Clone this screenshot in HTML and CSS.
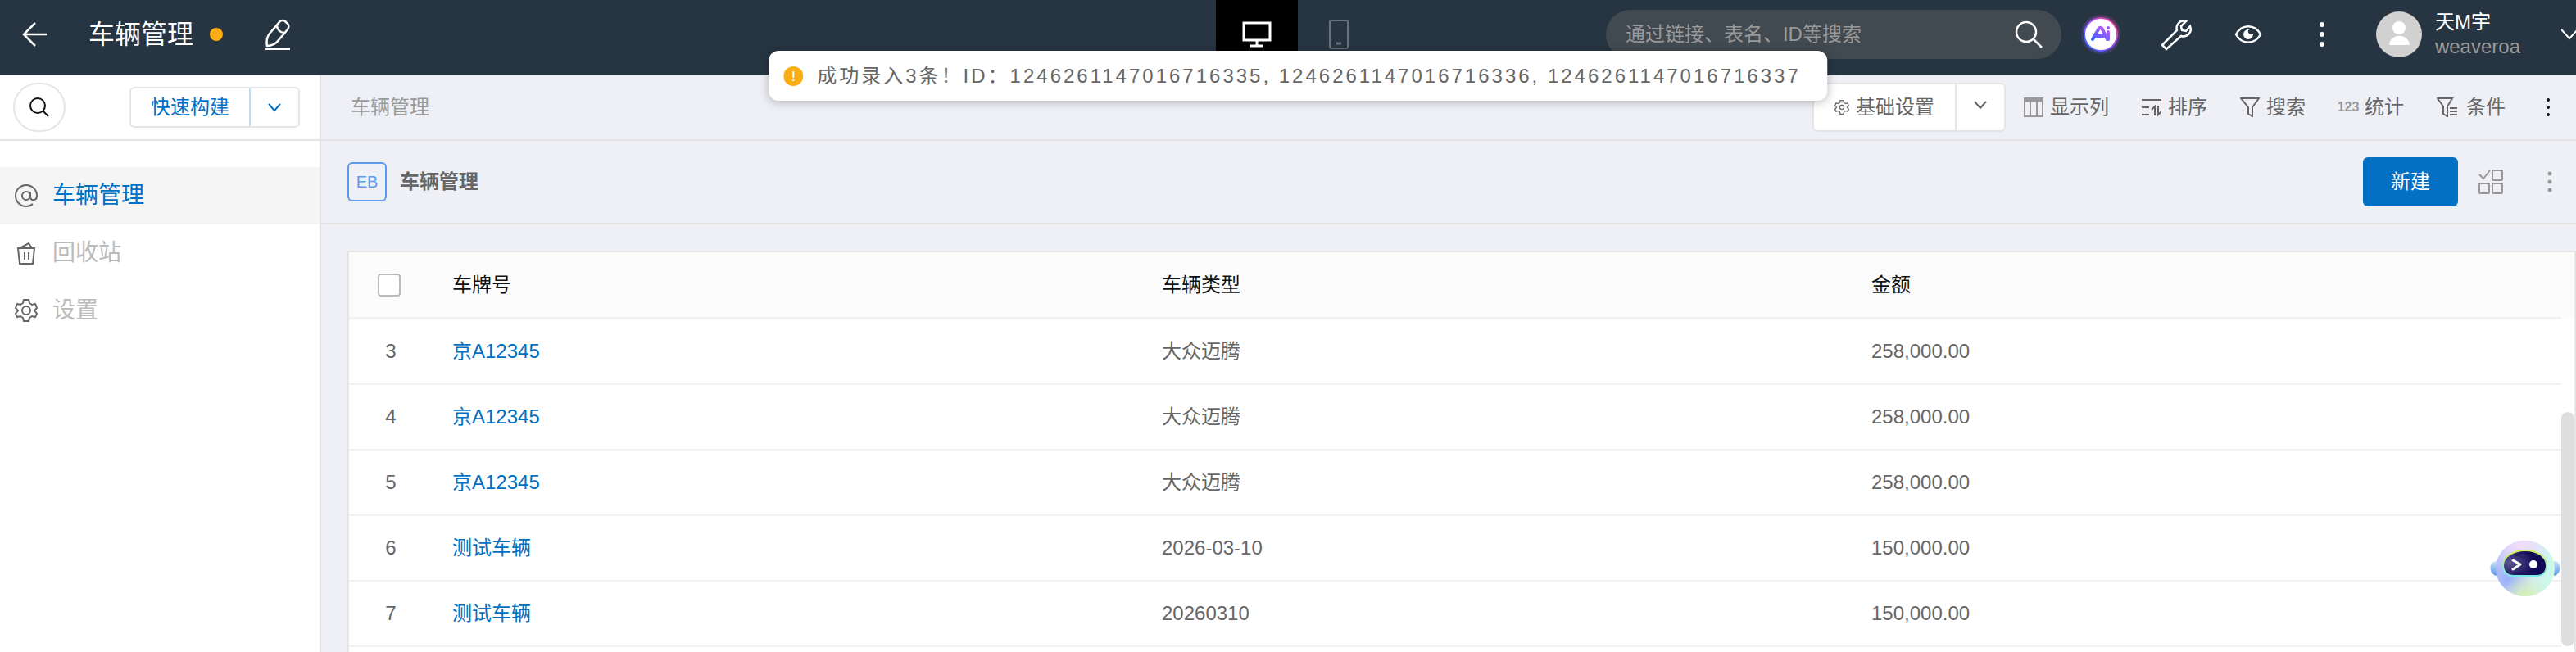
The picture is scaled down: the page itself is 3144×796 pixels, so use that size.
FILE: index.html
```html
<!DOCTYPE html>
<html lang="zh-CN">
  <head>
    <meta charset="UTF-8" />
    <meta name="viewport" content="width=device-width, initial-scale=1.0" />
    <title>车辆管理</title>
    <link rel="stylesheet" href="styles.css">
  </head>
  <body>
    <header class="topbar">
      <div class="topbar-left">
        <button class="icon-btn back" aria-label="返回">
          <svg width="32" height="32" viewBox="0 0 32 32"><path d="M17 2 3 16l14 14M3 16h28" /></svg>
        </button>
        <h1 class="app-name">车辆管理</h1>
        <span class="status-dot"></span>
        <button class="icon-btn" aria-label="编辑">
          <svg width="34" height="38" viewBox="0 0 34 38"><path d="M4 33c-1-5 0-11 3-15L18 5c2-3 5-4 8-2l2 2c3 2 3 5 1 8L18 26c-3 4-8 7-14 7zM16 8c0 5 4 9 9 9M2 37h30" /></svg>
        </button>
      </div>

      <div class="device-tabs">
        <button class="device-tab active" aria-label="电脑端">
          <svg width="36" height="32" viewBox="0 0 36 32"><path d="M2 2h32v21H2zM18 23v7M10 30h16" stroke-width="3" /></svg>
        </button>
        <button class="device-tab" aria-label="移动端">
          <svg width="26" height="38" viewBox="0 0 26 38"><rect x="2" y="2" width="22" height="34" rx="2" /><path d="M10 30h6" stroke-width="3" /></svg>
        </button>
      </div>

      <div class="topbar-right">
        <div class="global-search">
          <input type="text" aria-label="全局搜索" placeholder="通过链接、表名、ID等搜索" />
          <button class="icon-btn" aria-label="搜索">
            <svg width="36" height="36" viewBox="0 0 36 36"><circle cx="15" cy="15" r="12" /><path d="m24 24 10 10" /></svg>
          </button>
        </div>
        <div class="tools">
          <button class="icon-btn" aria-label="AI">
            <svg width="48" height="48" viewBox="0 0 48 48">
              <defs>
                <linearGradient id="ring" x1="0" y1="1" x2="1" y2="0">
                  <stop offset="0" stop-color="#2f6bff" />
                  <stop offset="0.5" stop-color="#9a55ff" />
                  <stop offset="1" stop-color="#ff3f7f" />
                </linearGradient>
                <linearGradient id="ai" gradientUnits="userSpaceOnUse" x1="14" y1="32" x2="24" y2="12">
                  <stop offset="0" stop-color="#2f62ff" />
                  <stop offset="1" stop-color="#c85cf5" />
                </linearGradient>
              </defs>
              <circle cx="24" cy="24" r="24" fill="url(#ring)" stroke="none" opacity="0.25" />
              <circle cx="24" cy="24" r="20" fill="#fff" stroke="url(#ring)" stroke-width="2" />
              <path d="m14 30 7-12c1-3 4-3 5 0l6 12M19 26h8M33 21v9" stroke="url(#ai)" stroke-width="4" stroke-linecap="round" />
              <circle cx="33" cy="16" r="2" fill="#a355e8" stroke="none" />
            </svg>
          </button>
          <button class="icon-btn" aria-label="工具">
            <svg width="48" height="40" viewBox="0 0 48 40"><path d="M9 33 27 15c-2-6 3-13 11-11l-6 6 1 5 5 1 5-6c3 8-4 14-11 12L14 38z" /></svg>
          </button>
          <button class="icon-btn" aria-label="预览">
            <svg width="48" height="32" viewBox="0 0 48 32"><path d="M9 16c7-13 23-13 30 0-7 13-23 13-30 0z" /><path d="M25 10a6 6 0 1 0 5 5 3 3 0 0 1-5-5z" fill="#fff" stroke="none" /></svg>
          </button>
          <button class="icon-btn dots" aria-label="更多">
            <svg width="48" height="32" viewBox="0 0 48 32"><circle cx="24" cy="4" r="3" /><circle cx="24" cy="16" r="3" /><circle cx="24" cy="28" r="3" /></svg>
          </button>
          <div class="user">
            <svg class="avatar" width="56" height="56" viewBox="0 0 56 56"><circle cx="28" cy="28" r="28" fill="#d1d1d1" /><circle cx="28" cy="20" r="8" fill="#fff" /><path d="M16 41c1-15 24-15 25 0z" fill="#fff" /></svg>
            <div class="user-text">
              <span class="user-name">天M宇</span>
              <span class="user-team">weaveroa</span>
            </div>
            <button class="icon-btn" aria-label="展开">
              <svg width="18" height="14" viewBox="0 0 18 14"><path d="m0 1 10 11L20 1" stroke-width="2" /></svg>
            </button>
          </div>
        </div>
      </div>
    </header>

    <div class="toast" role="status">
      <svg width="24" height="24" viewBox="0 0 24 24"><circle cx="12" cy="12" r="12" fill="#faad14" /><path d="M12 6v8M12 16v2" stroke="#fff" stroke-width="2" /></svg>
      <span>成功录入3条！ID：1246261147016716335, 1246261147016716336, 1246261147016716337</span>
    </div>

    <div class="layout">
      <aside class="sidebar">
        <div class="sidebar-head">
          <button class="round-search" aria-label="搜索菜单">
            <svg width="24" height="24" viewBox="0 0 24 24"><circle cx="10" cy="10" r="9" /><path d="m16 16 7 7" /></svg>
          </button>
          <div class="split-btn build">
            <button class="split-main">快速构建</button>
            <button class="split-arrow" aria-label="更多构建">
              <svg width="16" height="12" viewBox="0 0 16 12"><path d="m1 2 7 8 7-8" /></svg>
            </button>
          </div>
        </div>
        <nav class="menu">
          <a class="menu-item active" href="#">
            <svg width="28" height="28" viewBox="0 0 28 28"><circle cx="14" cy="14" r="5" /><path d="M19 9v7c0 4 8 5 8-2A13 13 0 1 0 14 27c3 0 6-1 8-3" /></svg>
            车辆管理
          </a>
          <a class="menu-item" href="#">
            <svg width="28" height="28" viewBox="0 0 28 28"><path d="M4 8h20l-2 19H6zM6 8l11-6 4 6M12 13v9M17 13v9" /></svg>
            回收站
          </a>
          <a class="menu-item" href="#">
            <svg width="28" height="28" viewBox="0 0 28 28"><circle cx="14" cy="14" r="5" /><path d="M11 1h6l1 4 3 2 4-1 2 5-3 3 3 4-2 4-4-1-3 2-1 4h-6l-1-4-3-2-4 1-2-4 3-4-3-3 2-5 4 1 3-2z" /></svg>
            设置
          </a>
        </nav>
      </aside>

      <main class="main">
        <div class="toolbar">
          <span class="crumb">车辆管理</span>
          <div class="toolbar-actions">
            <div class="split-btn settings">
              <button class="split-main">
                <svg width="18" height="18" viewBox="0 0 28 28"><circle cx="14" cy="14" r="4" /><path d="M11 1h6l1 4 3 2 4-1 2 5-3 3 3 4-2 4-4-1-3 2-1 4h-6l-1-4-3-2-4 1-2-4 3-4-3-3 2-5 4 1 3-2z" /></svg>
                基础设置
              </button>
              <button class="split-arrow" aria-label="更多设置">
                <svg width="16" height="16" viewBox="0 0 16 16"><path d="m1 1 7 8 7-8" /></svg>
              </button>
            </div>
            <div class="actions">
              <button class="action">
                <svg width="24" height="24" viewBox="0 0 24 24" class="light"><path d="M1 3h22" stroke-width="5" /><path d="M1 1h22v22H1zM8 4v19M16 4v19" /></svg>
                显示列
              </button>
              <button class="action">
                <svg width="24" height="24" viewBox="0 0 24 24"><path d="M0 3h24M0 12h9M0 21h9M12 15l4-4v11M20 10v11l4-4" /></svg>
                排序
              </button>
              <button class="action">
                <svg width="24" height="24" viewBox="0 0 24 24"><path d="M1 1h22l-8 11v11l-5-3v-8z" /></svg>
                搜索
              </button>
              <button class="action"><span class="num-icon">123</span>统计</button>
              <button class="action">
                <svg width="28" height="24" viewBox="0 0 28 24"><path d="M1 1h18l-6 10v12l-5-3v-9zM16 13h9M16 17h9M16 21h9" /></svg>
                条件
              </button>
              <button class="icon-btn dots dark" aria-label="更多">
                <svg width="24" height="24" viewBox="0 0 24 24"><circle cx="12" cy="3" r="2" /><circle cx="12" cy="12" r="2" /><circle cx="12" cy="21" r="2" /></svg>
              </button>
            </div>
          </div>
        </div>

        <div class="titlebar">
          <span class="eb">EB</span>
          <h2 class="page-title">车辆管理</h2>
          <button class="primary">新建</button>
          <button class="icon-btn grid-btn" aria-label="批量操作">
            <svg width="32" height="32" viewBox="0 0 32 32"><path d="m2 7 5 5 8-10" /><rect x="18" y="2" width="12" height="12" rx="1" /><rect x="2" y="18" width="12" height="12" rx="1" /><rect x="18" y="18" width="12" height="12" rx="1" /></svg>
          </button>
          <button class="icon-btn dots grey" aria-label="更多">
            <svg width="24" height="28" viewBox="0 0 24 28"><circle cx="12" cy="4" r="2.5" /><circle cx="12" cy="14" r="2.5" /><circle cx="12" cy="24" r="2.5" /></svg>
          </button>
        </div>

        <div class="content">
          <div class="table-box">
            <table class="table">
              <thead>
                <tr>
                  <th class="col-num"><input type="checkbox" class="check" aria-label="全选" /></th>
                  <th>车牌号</th>
                  <th>车辆类型</th>
                  <th>金额</th>
                </tr>
              </thead>
              <tbody>
                <tr>
                  <td class="col-num">3</td>
                  <td><a href="#">京A12345</a></td>
                  <td>大众迈腾</td>
                  <td>258,000.00</td>
                </tr>
                <tr>
                  <td class="col-num">4</td>
                  <td><a href="#">京A12345</a></td>
                  <td>大众迈腾</td>
                  <td>258,000.00</td>
                </tr>
                <tr>
                  <td class="col-num">5</td>
                  <td><a href="#">京A12345</a></td>
                  <td>大众迈腾</td>
                  <td>258,000.00</td>
                </tr>
                <tr>
                  <td class="col-num">6</td>
                  <td><a href="#">测试车辆</a></td>
                  <td>2026-03-10</td>
                  <td>150,000.00</td>
                </tr>
                <tr>
                  <td class="col-num">7</td>
                  <td><a href="#">测试车辆</a></td>
                  <td>20260310</td>
                  <td>150,000.00</td>
                </tr>
              </tbody>
            </table>
            <div class="scroll">
              <div class="scroll-head"></div>
              <div class="scroll-thumb"></div>
            </div>
          </div>
        </div>
      </main>
    </div>

    <button class="robot" aria-label="智能助手">
      <svg width="86" height="70" viewBox="0 0 86 70">
        <defs>
          <linearGradient id="ball" x1="0" y1="0.4" x2="1" y2="0.6">
            <stop offset="0" stop-color="#b4c0fb" />
            <stop offset="0.5" stop-color="#d9e6f6" />
            <stop offset="1" stop-color="#c9fce8" />
          </linearGradient>
          <radialGradient id="ball-top" cx="0.4" cy="0.05" r="0.55">
            <stop offset="0" stop-color="#f3dcfb" />
            <stop offset="1" stop-color="#f3dcfb" stop-opacity="0" />
          </radialGradient>
          <radialGradient id="ball-left" cx="0.22" cy="0.7" r="0.4">
            <stop offset="0" stop-color="#98affa" />
            <stop offset="1" stop-color="#98affa" stop-opacity="0" />
          </radialGradient>
          <radialGradient id="ball-bottom" cx="0.5" cy="1" r="0.4">
            <stop offset="0" stop-color="#d6f0b4" />
            <stop offset="1" stop-color="#d6f0b4" stop-opacity="0" />
          </radialGradient>
          <linearGradient id="ear" x1="0" y1="0" x2="0" y2="1">
            <stop offset="0" stop-color="#c9e6fb" />
            <stop offset="1" stop-color="#5a92ea" />
          </linearGradient>
          <linearGradient id="rim" x1="0" y1="0" x2="0" y2="1">
            <stop offset="0" stop-color="#d8f25a" />
            <stop offset="1" stop-color="#73ecea" />
          </linearGradient>
          <radialGradient id="face" cx="0.15" cy="0.5" r="0.6">
            <stop offset="0" stop-color="#5b5590" />
            <stop offset="1" stop-color="#130a55" />
          </radialGradient>
        </defs>
        <path d="M8 25c-10 0-10 16 0 18zM78 25c10 0 10 16 0 18z" fill="url(#ear)" />
        <ellipse cx="43" cy="34" rx="36" ry="34" fill="url(#ball)" />
        <ellipse cx="43" cy="34" rx="36" ry="34" fill="url(#ball-top)" />
        <ellipse cx="43" cy="34" rx="36" ry="34" fill="url(#ball-left)" />
        <ellipse cx="43" cy="34" rx="36" ry="34" fill="url(#ball-bottom)" />
        <path d="M43 12c14 0 26 7 26 18 0 9-5 13-12 13H29c-8 0-13-5-13-13 0-11 13-18 27-18z" fill="url(#face)" stroke="url(#rim)" stroke-width="2" />
        <path d="m28 24 9 5-9 6" fill="none" stroke="#fff" stroke-width="3" stroke-linecap="round" stroke-linejoin="round" />
        <circle cx="53" cy="29" r="5" fill="#fff" />
      </svg>
    </button>
  </body>
</html>
```
FILE: styles.css
```css
* {
  box-sizing: border-box;
}
body {
  margin: 0;
  height: 100vh;
  overflow: hidden;
  display: flex;
  flex-direction: column;
  font-family: "Liberation Sans", "Noto Sans CJK SC", sans-serif;
  font-size: 24px;
  line-height: 32px;
  color: #666;
  background: #eff0f5;
}
button {
  font: inherit;
  color: inherit;
  background: none;
  border: 0;
  padding: 0;
  cursor: pointer;
}
a {
  color: #0070c4;
  text-decoration: none;
}
h1,
h2 {
  margin: 0;
}
svg {
  display: block;
  flex: none;
}
button svg,
.menu-item svg {
  fill: none;
  stroke: currentColor;
  stroke-width: 2;
}

/* top bar */
.topbar {
  display: grid;
  grid-template-columns: 1fr 200px 1fr;
  flex: none;
  height: 92px;
  padding-left: 24px;
  background: #273542;
  color: #fff;
}
.topbar-left,
.topbar-right,
.tools,
.user {
  display: flex;
  align-items: center;
}
.back {
  margin: 0 50px 0 2px;
}
.app-name {
  font-size: 32px;
  line-height: 40px;
  font-weight: normal;
}
.status-dot {
  width: 16px;
  height: 16px;
  margin: 0 50px 0 20px;
  border-radius: 50%;
  background: #faad14;
}
.topbar-left,
.topbar-right {
  padding-bottom: 8px;
}
.topbar-left .icon-btn svg,
.global-search svg,
.tools svg {
  stroke-width: 2.5;
}
.device-tabs {
  display: grid;
  grid-template-columns: 1fr 1fr;
}
.device-tab {
  display: flex;
  align-items: center;
  justify-content: center;
  padding-bottom: 8px;
  color: #68727b;
}
.device-tab.active {
  background: #000;
  color: #fff;
}
.topbar-right {
  justify-content: flex-end;
  gap: 24px;
}
.global-search {
  display: flex;
  align-items: center;
  width: 556px;
  height: 60px;
  padding: 0 22px 0 24px;
  border-radius: 30px;
  background: #414951;
}
.global-search input {
  flex: 1;
  min-width: 0;
  padding: 0;
  border: 0;
  outline: 0;
  background: none;
  color: #fff;
  font: inherit;
}
.global-search input::placeholder {
  color: #999;
  opacity: 1;
}
.tools {
  gap: 42px;
}
.dots svg {
  fill: currentColor;
  stroke: none;
}
.user-text {
  display: flex;
  flex-direction: column;
  margin: 0 50px 0 16px;
  line-height: 30px;
}
.user-team {
  color: #999;
}

/* message */
.toast {
  position: absolute;
  top: 62px;
  left: 50%;
  z-index: 10;
  display: flex;
  align-items: center;
  gap: 17px;
  height: 61px;
  margin-left: 12px;
  padding: 0 32px 0 18px;
  transform: translateX(-50%);
  border-radius: 12px;
  background: #fff;
  box-shadow: 0 2px 12px rgba(0, 0, 0, 0.25);
  letter-spacing: 3px;
  white-space: nowrap;
}

.layout {
  display: flex;
  flex: 1;
  min-height: 0;
}

/* sidebar */
.sidebar {
  flex: none;
  width: 392px;
  border-right: 2px solid #e5e5e5;
  background: #fff;
}
.sidebar-head {
  display: flex;
  align-items: center;
  justify-content: space-between;
  height: 80px;
  padding: 0 24px 0 16px;
  border-bottom: 2px solid #e5e5e5;
}
.round-search {
  display: flex;
  align-items: center;
  justify-content: center;
  width: 64px;
  height: 60px;
  border: 2px solid #e5e5e5;
  border-radius: 30px;
  color: #111;
}
.split-btn {
  display: flex;
  border: 2px solid #e5e5e5;
  border-radius: 6px;
  background: #fff;
}
.split-main,
.split-arrow {
  display: flex;
  align-items: center;
  justify-content: center;
}
.build {
  height: 50px;
  color: #0070c4;
}
.build .split-main {
  width: 144px;
}
.build .split-arrow {
  width: 60px;
  border-left: 2px solid #bfdbf0;
}
.menu {
  padding-top: 32px;
}
.menu-item {
  display: flex;
  align-items: center;
  gap: 18px;
  height: 70px;
  padding-left: 18px;
  font-size: 28px;
  color: #bbb;
}
.menu-item svg {
  color: #666;
}
.menu-item.active {
  background: #f5f5f5;
  color: #0070c4;
}

/* main area */
.main {
  display: flex;
  flex: 1;
  flex-direction: column;
  min-width: 0;
}
.toolbar {
  display: flex;
  align-items: center;
  justify-content: space-between;
  flex: none;
  height: 80px;
  padding: 0 22px 0 36px;
  border-bottom: 2px solid #e5e5e5;
}
.crumb {
  color: #999;
}
.toolbar-actions {
  display: flex;
  align-items: center;
  gap: 22px;
}
.settings {
  height: 60px;
}
.settings .split-main {
  gap: 8px;
  width: 172px;
}
.settings .split-arrow {
  width: 60px;
  border-left: 2px solid #e5e5e5;
}
.actions {
  display: flex;
  align-items: center;
  gap: 40px;
}
.action {
  display: flex;
  align-items: center;
  gap: 8px;
}
.light {
  color: #999;
}
.num-icon {
  display: flex;
  justify-content: center;
  width: 24px;
  font-size: 16px;
  font-weight: bold;
  color: #999;
}
.dark {
  color: #111;
}
.grey,
.grid-btn {
  color: #999;
}
.titlebar {
  display: flex;
  align-items: center;
  flex: none;
  height: 102px;
  padding: 0 20px 0 32px;
  border-bottom: 2px solid #e5e5e5;
}
.eb {
  display: flex;
  align-items: center;
  justify-content: center;
  width: 48px;
  height: 48px;
  margin-right: 16px;
  border: 2px solid #5d9cec;
  border-radius: 6px;
  font-size: 20px;
  color: #5d9cec;
}
.page-title {
  flex: 1;
  font-size: 24px;
}
.primary {
  width: 116px;
  height: 60px;
  border-radius: 6px;
  background: #0370c4;
  color: #fff;
}
.grid-btn {
  margin: 0 44px 0 24px;
}
.content {
  flex: 1;
  min-height: 0;
  padding: 32px 0 0 32px;
}

/* table */
.table-box {
  display: grid;
  grid-template-columns: 1fr 16px;
  align-items: start;
  height: 100%;
  border: 2px solid #e5e5e5;
  border-bottom: 0;
  background: #fff;
}
.table {
  width: 100%;
  table-layout: fixed;
  border-collapse: separate;
  border-spacing: 0;
}
.table th,
.table td {
  height: 80px;
  padding: 0 24px;
  border-bottom: 2px solid #f2f2f2;
  text-align: left;
}
.table th {
  height: 82px;
  border-bottom-width: 3px;
  background: #fbfbfb;
  color: #111;
  font-weight: normal;
}
.table .col-num {
  width: 102px;
  padding: 0;
  text-align: center;
}
.table th.col-num {
  padding-right: 4px;
}
.check {
  appearance: none;
  display: block;
  width: 28px;
  height: 28px;
  margin: 0 auto;
  border: 2px solid #bbb;
  border-radius: 4px;
  background: #fff;
}
.scroll-head {
  height: 81px;
  background: #fbfbfb;
}
.scroll-thumb {
  height: 286px;
  margin-top: 114px;
  border-radius: 8px;
  background: #dddee0;
}

/* assistant floats over the list */
.robot {
  position: absolute;
  right: 19px;
  bottom: 66px;
}
.robot svg {
  stroke: none;
}
```
